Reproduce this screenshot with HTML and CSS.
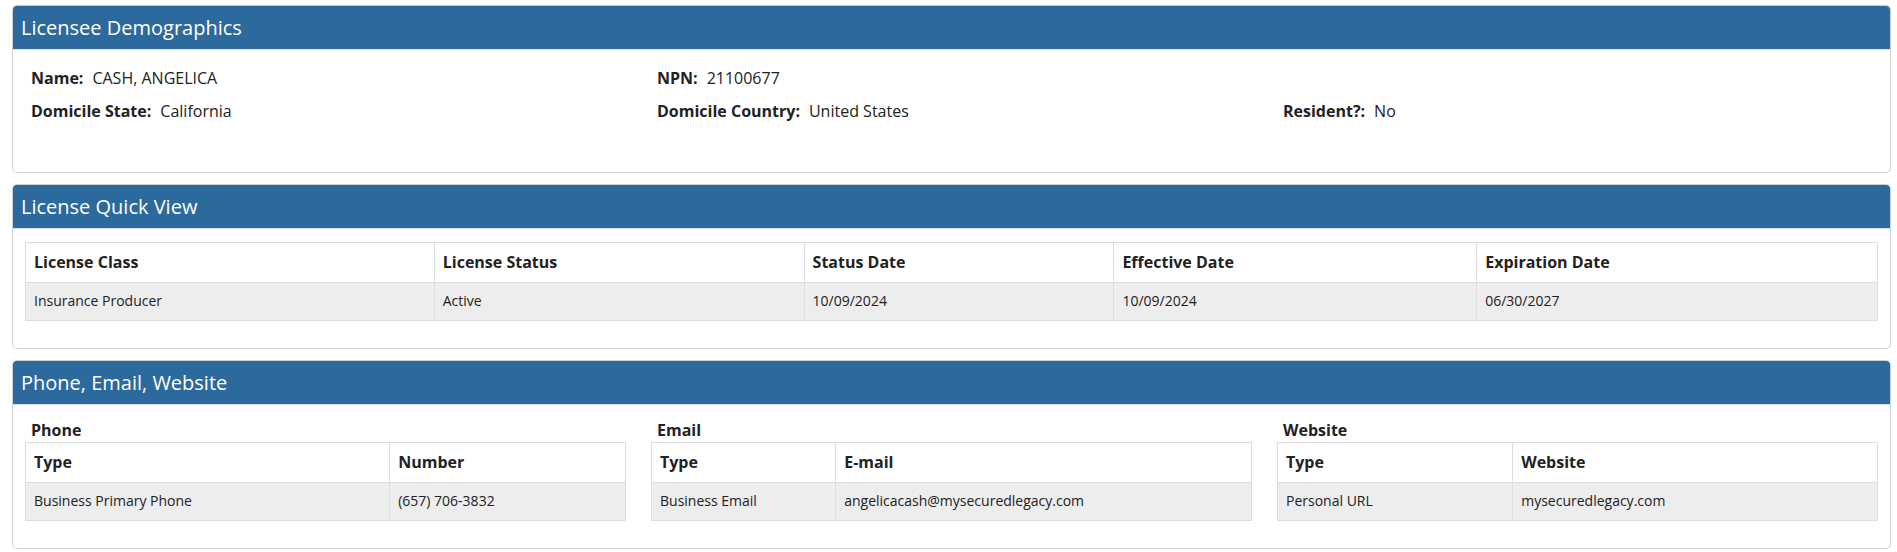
FILE: index.html
```html
<!DOCTYPE html>
<html lang="en">
<head>
<meta charset="utf-8">
<title>Licensee Details</title>
<link rel="stylesheet" href="styles.css">
</head>
<body>
<div class="page">
  <section class="panel">
    <div class="panel-heading">Licensee Demographics</div>
    <div class="panel-body demo-body">
      <div class="demo-grid">
        <div class="field"><span class="label">Name:</span><span class="value">CASH, ANGELICA</span></div>
        <div class="field"><span class="label">NPN:</span><span class="value">21100677</span></div>
        <div class="field"></div>
        <div class="field"><span class="label">Domicile State:</span><span class="value">California</span></div>
        <div class="field"><span class="label">Domicile Country:</span><span class="value">United States</span></div>
        <div class="field"><span class="label">Resident?:</span><span class="value">No</span></div>
      </div>
    </div>
  </section>

  <section class="panel">
    <div class="panel-heading">License Quick View</div>
    <div class="panel-body">
      <table class="grid-table license-table">
        <thead>
          <tr><th class="c-class">License Class</th><th class="c-status">License Status</th><th class="c-sdate">Status Date</th><th class="c-edate">Effective Date</th><th>Expiration Date</th></tr>
        </thead>
        <tbody>
          <tr><td>Insurance Producer</td><td>Active</td><td>10/09/2024</td><td>10/09/2024</td><td>06/30/2027</td></tr>
        </tbody>
      </table>
    </div>
  </section>

  <section class="panel">
    <div class="panel-heading">Phone, Email, Website</div>
    <div class="panel-body contact-body">
      <div class="contact-grid">
        <div class="contact-col">
          <h4 class="contact-title">Phone</h4>
          <table class="grid-table">
            <thead><tr><th class="c-phone-type">Type</th><th>Number</th></tr></thead>
            <tbody><tr><td>Business Primary Phone</td><td>(657) 706-3832</td></tr></tbody>
          </table>
        </div>
        <div class="contact-col">
          <h4 class="contact-title">Email</h4>
          <table class="grid-table">
            <thead><tr><th class="c-email-type">Type</th><th>E-mail</th></tr></thead>
            <tbody><tr><td>Business Email</td><td>angelicacash@mysecuredlegacy.com</td></tr></tbody>
          </table>
        </div>
        <div class="contact-col">
          <h4 class="contact-title">Website</h4>
          <table class="grid-table">
            <thead><tr><th class="c-web-type">Type</th><th>Website</th></tr></thead>
            <tbody><tr><td>Personal URL</td><td>mysecuredlegacy.com</td></tr></tbody>
          </table>
        </div>
      </div>
    </div>
  </section>
</div>
</body>
</html>
```

FILE: styles.css
```css
* { box-sizing: border-box; }

html, body {
  margin: 0;
  padding: 0;
  background: #ffffff;
}

body {
  font-family: "Open Sans", "DejaVu Sans", sans-serif;
  color: #222222;
}

.page {
  padding: 5px 6px 0 12px;
}

.panel {
  border: 1px solid #cfcfcf;
  border-radius: 5px;
  margin-bottom: 11px;
  background: #fff;
  overflow: hidden;
}

.panel-heading {
  background: #2c6a9d;
  color: #ffffff;
  font-size: 20px;
  line-height: 43px;
  padding: 0 8px;
  border-bottom: 1px solid #d9e3ec;
}

.panel-body {
  padding: 13px 12px 27px;
}

.demo-body {
  padding: 17px 12px 50px;
}

.demo-grid {
  display: grid;
  grid-template-columns: repeat(3, 1fr);
  column-gap: 25px;
  row-gap: 11px;
}

.field {
  font-size: 16px;
  line-height: 22px;
  padding-left: 6px;
  min-height: 22px;
}

.label {
  font-weight: 700;
  margin-right: 9px;
}

.grid-table {
  width: 100%;
  border-collapse: collapse;
  table-layout: fixed;
}

.grid-table th,
.grid-table td {
  border: 1px solid #dddddd;
  text-align: left;
  vertical-align: middle;
  padding: 8px 8px 9px;
}

.grid-table th {
  font-size: 16px;
  font-weight: 700;
  line-height: 22px;
  background: #ffffff;
}

.grid-table td {
  font-size: 14px;
  line-height: 20px;
  background: #ecedec;
}

.c-class { width: 22.07%; }
.c-status { width: 19.97%; }
.c-sdate { width: 16.73%; }
.c-edate { width: 19.59%; }

.contact-body {
  padding-top: 14px;
}

.contact-grid {
  display: grid;
  grid-template-columns: repeat(3, 1fr);
  column-gap: 25px;
}

.contact-title {
  margin: 0 0 1px;
  padding-left: 6px;
  font-size: 16px;
  font-weight: 700;
  line-height: 22px;
}

.c-phone-type { width: 60.7%; }
.c-email-type { width: 30.7%; }
.c-web-type { width: 39.2%; }
```
